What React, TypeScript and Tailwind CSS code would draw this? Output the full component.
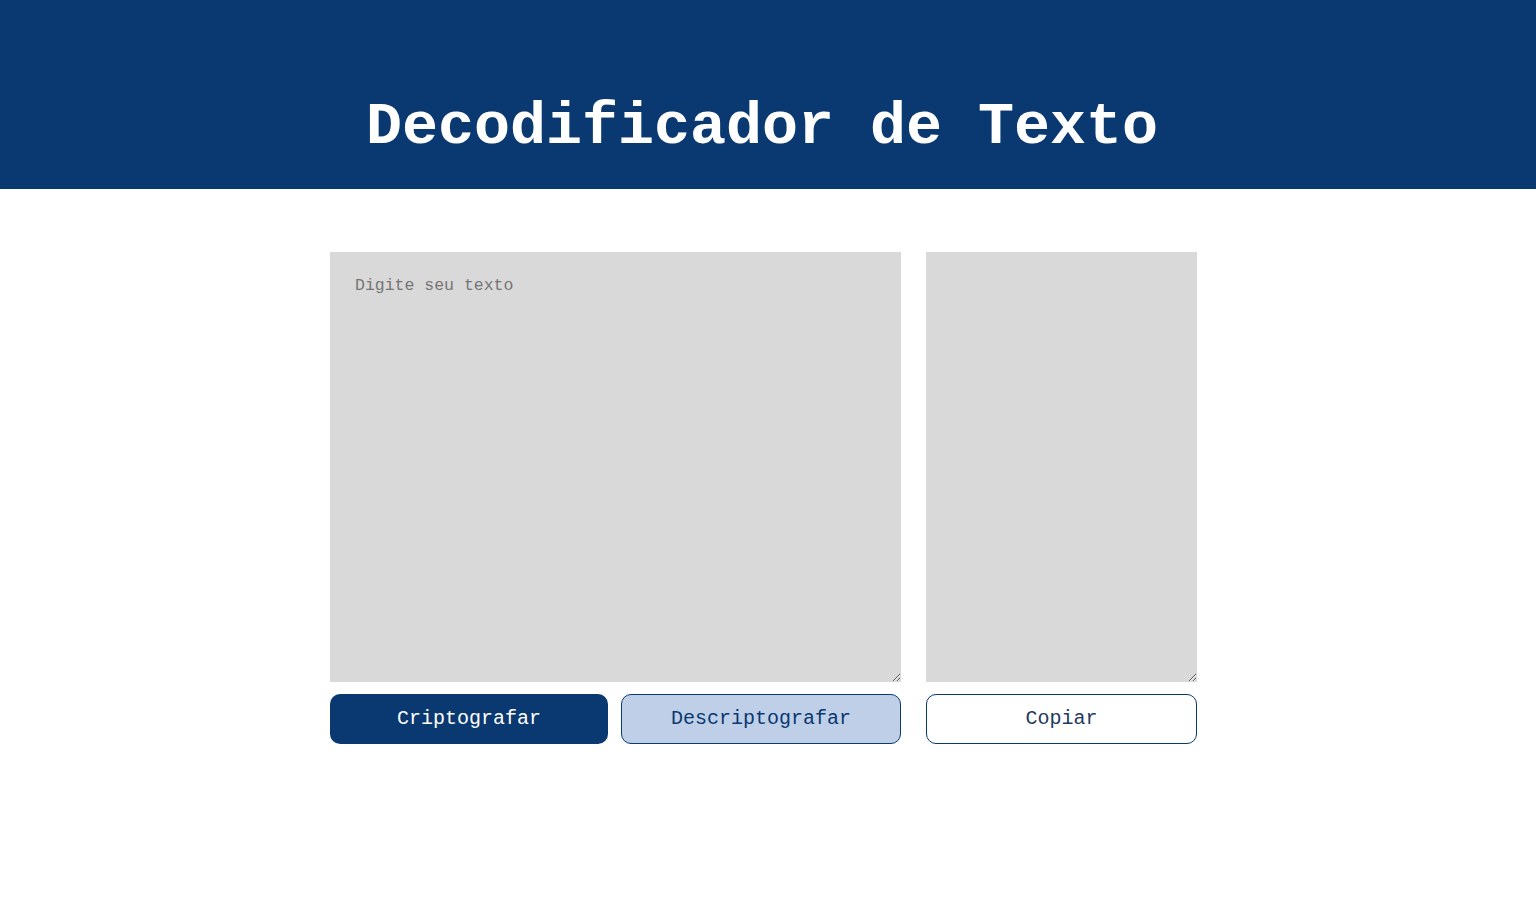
export default function App() {
  return (
    <div className="min-h-screen bg-white font-['Courier_New','Liberation_Mono',monospace]">
      <header className="h-[189px] bg-[#0a3871] flex justify-center pt-[94px]">
        <h1 className="text-white font-bold text-[60px] leading-[66px] ml-[-12px]">
          Decodificador de Texto
        </h1>
      </header>

      <main className="flex justify-center gap-[25px] pt-[63px] pr-[9px]">
        <section className="w-[571px] flex flex-col gap-3">
          <textarea
            placeholder="Digite seu texto"
            className="w-[571px] h-[430px] bg-[#d9d9d9] px-[25px] py-[22px] text-[16.5px] text-[#333] placeholder:text-[#757575] outline-none"
          />
          <div className="flex gap-[13px]">
            <button className="w-[278px] h-[50px] rounded-[10px] bg-[#0a3871] text-white text-[20px]">
              Criptografar
            </button>
            <button className="w-[280px] h-[50px] rounded-[10px] bg-[#bfcfe7] border border-[#0a3871] text-[#0a3871] text-[20px]">
              Descriptografar
            </button>
          </div>
        </section>

        <section className="w-[271px] flex flex-col gap-3">
          <textarea
            readOnly
            className="w-[271px] h-[430px] bg-[#d9d9d9] p-6 text-[16px] outline-none"
          />
          <button className="w-[271px] h-[50px] rounded-[10px] bg-white border border-[#0a3871] text-[#1f3a5f] text-[20px]">
            Copiar
          </button>
        </section>
      </main>
    </div>
  )
}
